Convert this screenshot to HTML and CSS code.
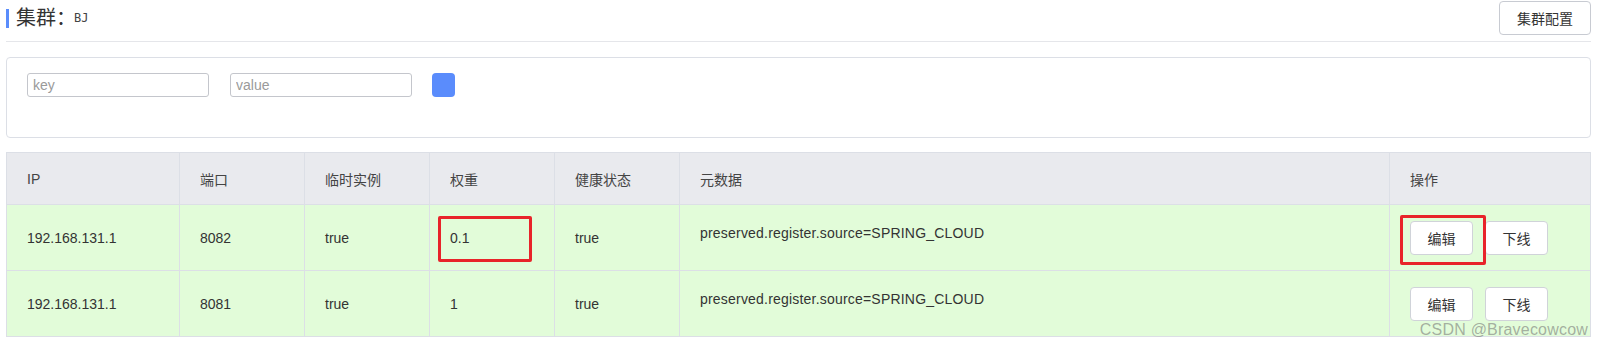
FILE: index.html
```html
<!DOCTYPE html>
<html lang="zh-CN">
<head>
  <meta charset="UTF-8">
  <title>集群 BJ</title>
  <link rel="stylesheet" href="styles.css">
</head>
<body>
  <div class="page">
    <div class="cabecalho">
      <h2 class="titulo"><span class="barra"></span>集群：<small>BJ</small></h2>
      <button class="btn">集群配置</button>
    </div>

    <div class="filtro">
      <input type="text" placeholder="key">
      <input type="text" placeholder="value">
      <button class="btn-azul"></button>
    </div>

    <div class="tabela-wrap">
      <table class="tabela">
        <colgroup>
          <col style="width:173px"><col style="width:125px"><col style="width:125px"><col style="width:125px"><col style="width:125px"><col><col style="width:201px">
        </colgroup>
        <thead>
          <tr><th>IP</th><th>端口</th><th>临时实例</th><th>权重</th><th>健康状态</th><th>元数据</th><th>操作</th></tr>
        </thead>
        <tbody>
          <tr>
            <td>192.168.131.1</td><td>8082</td><td>true</td>
            <td class="marcado">0.1<span class="destaque d-peso"></span></td>
            <td>true</td>
            <td class="meta">preserved.register.source=SPRING_CLOUD</td>
            <td class="marcado acoes"><button class="btn">编辑</button><button class="btn">下线</button><span class="destaque d-editar"></span></td>
          </tr>
          <tr>
            <td>192.168.131.1</td><td>8081</td><td>true</td><td>1</td><td>true</td>
            <td class="meta">preserved.register.source=SPRING_CLOUD</td>
            <td class="acoes"><button class="btn">编辑</button><button class="btn">下线</button></td>
          </tr>
        </tbody>
      </table>
      <div class="marca">CSDN @Bravecowcow</div>
    </div>
  </div>
</body>
</html>
```

FILE: styles.css
```css
* {
  box-sizing: border-box;
  margin: 0;
  padding: 0;
  font-family: 'Liberation Sans', 'Noto Sans CJK SC', sans-serif;
}
body {
  background: #fff;
  color: #333;
}
.page {
  padding: 0 13px 0 6px;
}
.cabecalho {
  display: flex;
  justify-content: space-between;
  align-items: flex-start;
  padding-top: 1px;
  height: 42px;
  border-bottom: 1px solid #e5e6ea;
}
.titulo {
  display: flex;
  align-items: center;
  font-size: 20px;
  font-weight: normal;
  line-height: 20px;
  margin-top: 7px;
  color: #333;
}
.titulo small {
  font-family: 'DejaVu Sans Mono', monospace;
  font-size: 12px;
  color: #444;
  margin-left: -2px;
}
.barra {
  display: inline-block;
  width: 3px;
  height: 19px;
  background: #5a8dfc;
  margin-right: 7px;
}
.btn {
  height: 34px;
  padding: 0 14px;
  border: 1px solid #c8cbd2;
  border-radius: 4px;
  background: #fff;
  color: #333;
  font-size: 14px;
  cursor: pointer;
}
.cabecalho .btn {
  width: 92px;
  padding: 0;
}
.filtro {
  margin-top: 15px;
  height: 81px;
  border: 1px solid #dcdfe6;
  border-radius: 4px;
  padding: 15px 20px;
  display: flex;
  align-items: flex-start;
  gap: 21px;
}
.filtro input {
  width: 182px;
  height: 24px;
  border: 1px solid #c4c6cc;
  border-radius: 3px;
  padding: 0 5px;
  font-size: 14px;
  color: #333;
}
.filtro input::placeholder {
  color: #9a9a9a;
}
.btn-azul {
  width: 23px;
  height: 24px;
  border: none;
  border-radius: 4px;
  background: #5a8cfc;
  margin-left: -1px;
}
.tabela-wrap {
  position: relative;
  margin-top: 14px;
}
.tabela {
  width: 100%;
  border-collapse: collapse;
  table-layout: fixed;
  font-size: 14px;
  border: 1px solid #dcdfe6;
}
.tabela th {
  background: #e9eaee;
  font-weight: normal;
  text-align: left;
  height: 52px;
  padding: 0 20px;
  color: #444;
  border: 1px solid #dcdfe6;
}
.tabela td {
  background: #e2fcd9;
  height: 66px;
  padding: 0 20px;
  border: 1px solid #dcdfe6;
  color: #333;
}
.tabela td.meta {
  vertical-align: top;
  padding-top: 18px;
  line-height: 20px;
  letter-spacing: 0.2px;
}
.acoes .btn {
  width: 63px;
  padding: 0;
  margin-right: 12px;
  border-color: #d0d3d9;
}
.marcado {
  position: relative;
}
.destaque {
  position: absolute;
  border: 3px solid #e8242a;
  border-radius: 2px;
}
.d-peso {
  left: 8px;
  top: 11px;
  width: 94px;
  height: 46px;
}
.d-editar {
  left: 10px;
  top: 10px;
  width: 86px;
  height: 50px;
}
.marca {
  position: absolute;
  right: 3px;
  bottom: -2px;
  font-size: 16px;
  color: rgba(110, 110, 110, 0.55);
  letter-spacing: 0.2px;
}
```
